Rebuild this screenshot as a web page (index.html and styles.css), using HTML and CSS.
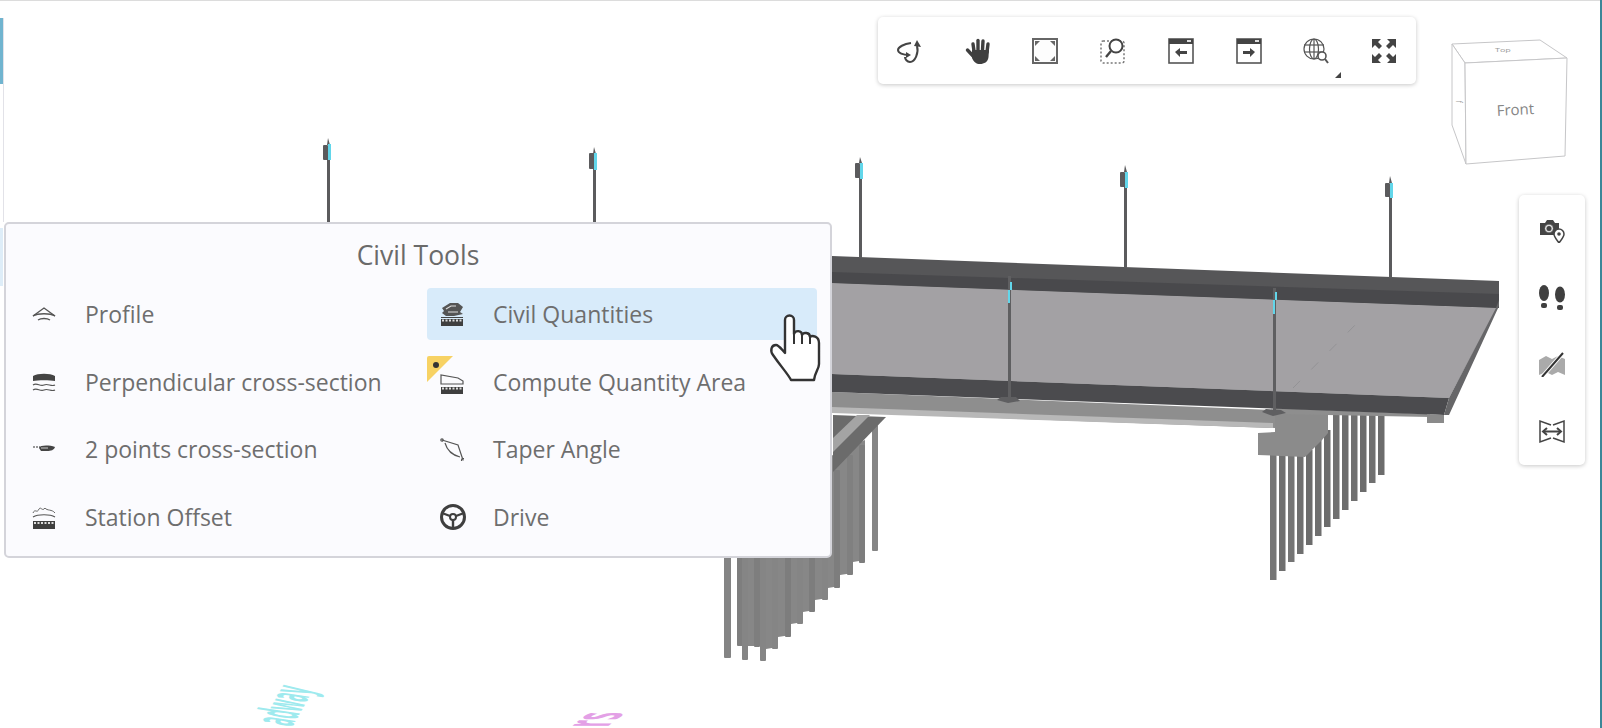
FILE: index.html
```html
<!DOCTYPE html>
<html lang="en">
<head>
    <meta charset="UTF-8">
    <title>Civil Tools</title>
    <link rel="stylesheet" href="styles.css">
</head>
<body>
<div class="viewer">
    <!-- 3D model -->
    <svg class="scene" width="1602" height="728" viewBox="0 0 1602 728">
        <!-- left pier -->
        <polygon fill="#878787" points="737,500 865,440 865,560 853,562 853,573 840,575 840,586 828,588 828,598 815,600 815,610 803,612 803,622 791,624 791,635 778,637 778,647 766,649 766,633 754,633 754,646 748,646 748,633 737,633"/>
        <rect x="724" y="540" width="7" height="118" rx="1" fill="#848484"/>
        <rect x="737" y="540" width="6" height="106" rx="1" fill="#7e7e7e"/>
        <rect x="742" y="540" width="6" height="120" rx="1" fill="#858585"/>
        <rect x="754" y="540" width="6" height="107" rx="1" fill="#7e7e7e"/>
        <rect x="760" y="540" width="6" height="121" rx="1" fill="#858585"/>
        <rect x="772" y="540" width="6" height="109" rx="1" fill="#858585"/>
        <rect x="785" y="540" width="6" height="97" rx="1" fill="#7d7d7d"/>
        <rect x="797" y="540" width="6" height="84" rx="1" fill="#858585"/>
        <rect x="809" y="540" width="6" height="72" rx="1" fill="#7d7d7d"/>
        <rect x="822" y="540" width="6" height="60" rx="1" fill="#858585"/>
        <rect x="834" y="470" width="6" height="118" rx="1" fill="#7d7d7d"/>
        <rect x="847" y="455" width="6" height="120" rx="1" fill="#808080"/>
        <rect x="859" y="445" width="6" height="118" rx="1" fill="#7d7d7d"/>
        <rect x="872" y="425" width="6" height="126" rx="1" fill="#858585"/>
        <polygon fill="#6b6b6b" points="833,415 886,417 833,472"/>
        <polygon fill="#a4a4a4" points="833,438 857,415 870,415 833,452"/>

        <!-- right pier -->
        <rect x="1270" y="452" width="6.500" height="128" fill="#757575"/>
        <rect x="1279" y="452" width="6.500" height="119" fill="#6f6f6f"/>
        <rect x="1288" y="452" width="6.500" height="110" fill="#757575"/>
        <rect x="1297" y="452" width="6.500" height="102" fill="#6f6f6f"/>
        <rect x="1306" y="450" width="6.500" height="95" fill="#6c6c6c"/>
        <rect x="1315" y="440" width="6.500" height="96" fill="#6f6f6f"/>
        <rect x="1324" y="430" width="6.500" height="97" fill="#6c6c6c"/>
        <rect x="1333" y="413" width="6.500" height="106" fill="#707070"/>
        <rect x="1342" y="413" width="6.500" height="97" fill="#6c6c6c"/>
        <rect x="1351" y="413" width="6.500" height="88" fill="#707070"/>
        <rect x="1360" y="413" width="6.500" height="79" fill="#6c6c6c"/>
        <rect x="1369" y="413" width="6.500" height="70" fill="#707070"/>
        <rect x="1378" y="413" width="6.500" height="62" fill="#6c6c6c"/>
        <polygon fill="#8b8b8b" points="1258,433 1275,432 1275,413 1328,413 1328,433 1322,440 1305,457 1258,455"/>

        <!-- deck -->
        <polygon fill="#8e8e8e" points="832,392 1275,410 1275,428 832,412"/>
        <polygon fill="#b8b8b8" points="832,407 1273,423 1273,428 832,413"/>
        <polygon fill="#8e8e8e" points="1275,408 1430,414 1430,417 1275,414"/>
        <polygon fill="#a3a1a4" points="832,283 1497,308 1449,398 832,374"/>
        <polygon fill="#565658" points="832,256 1499,281 1499,308 832,283"/>
        <polygon fill="#49494c" points="832,272 1499,294 1499,308 832,283"/>
        <polygon fill="#4b4b4e" points="832,374 1449,398 1444,415 832,392"/>
        <polygon fill="#666668" points="1499,300 1499,306 1449,415 1444,415 1449,398 1496,308"/>
        <polygon fill="#8a8a8a" points="1427,414 1444,415 1444,423 1427,423"/>
        <line x1="1293" y1="388" x2="1362" y2="318" stroke="#8c8c8e" stroke-opacity=".7" stroke-dasharray="10 16"/>

        <!-- lamp posts, back row -->
        <g fill="#5b5b5d">
            <rect x="327" y="150" width="3" height="72"/>
            <rect x="593" y="160" width="3" height="62"/>
            <rect x="859" y="170" width="3" height="88"/>
            <rect x="1124" y="178" width="3" height="90"/>
            <rect x="1389" y="190" width="3" height="88"/>
            <polygon points="328,138 330,145 327,145"/>
            <polygon points="594,147 596,154 593,154"/>
            <polygon points="860,157 862,163 859,163"/>
            <polygon points="1125,165 1127,172 1124,172"/>
            <polygon points="1390,176 1392,183 1389,183"/>
            <rect x="323" y="145" width="5" height="15" rx="1"/>
            <rect x="589" y="153" width="5" height="16" rx="1"/>
            <rect x="855" y="163" width="5" height="15" rx="1"/>
            <rect x="1120" y="172" width="5" height="15" rx="1"/>
            <rect x="1385" y="183" width="5" height="14" rx="1"/>
        </g>
        <g fill="#62d6ea">
            <rect x="328" y="144" width="3" height="16"/>
            <rect x="594" y="153" width="3" height="17"/>
            <rect x="860" y="163" width="3" height="16"/>
            <rect x="1125" y="172" width="3" height="16"/>
            <rect x="1390" y="183" width="3" height="15"/>
        </g>

        <!-- lamp posts, front row -->
        <g fill="#5f5f61">
            <rect x="1008" y="276" width="3" height="122"/>
            <rect x="1273" y="288" width="3" height="124"/>
            <polygon points="997,400 1001,397 1016,397 1020,401 1008,403"/>
            <polygon points="1262,412 1266,409 1281,410 1286,413 1273,416"/>
        </g>
        <g fill="#62d6ea">
            <rect x="1010" y="282" width="2" height="8"/>
            <rect x="1008" y="290" width="2" height="13"/>
            <rect x="1275" y="292" width="2" height="8"/>
            <rect x="1273" y="300" width="2" height="14"/>
        </g>

        <!-- labels lying in the model -->
        <text class="scene-label scene-label-cyan" transform="matrix(.6 -1.05 5 .75 292 727)">adway</text>
        <text class="scene-label scene-label-pink" transform="matrix(1.8 -1.4 6 0 607 727)">rs</text>

        <!-- view cube -->
        <g fill="#fff" stroke="#c6c6c8" stroke-width="1">
            <polygon points="1452,44 1540,40 1567,58 1465,63"/>
            <polygon points="1452,44 1465,63 1466,164 1452,125"/>
            <polygon points="1465,63 1567,58 1565,156 1466,164"/>
        </g>
        <text class="cube-label" transform="translate(1497 116) rotate(-3)">Front</text>
        <text class="cube-mini" transform="translate(1456 101) rotate(90) scale(.6 1)">f</text>
        <text class="cube-mini" transform="translate(1495 52) scale(1 .5)">Top</text>
    </svg>

    <div class="frame-top"></div>
    <div class="frame-left"></div>
    <div class="frame-tab"></div>
    <div class="frame-tab-low"></div>
    <div class="frame-right"></div>

    <!-- main toolbar -->
    <div class="toolbar">
        <svg class="tool" viewBox="0 0 26 26" fill="none" stroke="#444" stroke-width="2">
            <path d="M12 17C6 17 1 15 1 12 1 9 7 6 14 5"/>
            <path d="M20 8C22 15 18 24 13 24 10 24 8 21 8 19"/>
            <polygon points="20,2 24,9 17,8" fill="#444" stroke="none"/>
            <polygon points="14,17 9,14 9,20" fill="#444" stroke="none"/>
        </svg>
        <svg class="tool" viewBox="0 0 26 26">
            <g stroke="#3f3f3f" stroke-width="3.4" stroke-linecap="round">
                <line x1="9" y1="13" x2="8" y2="6"/>
                <line x1="13" y1="12" x2="13" y2="2.5"/>
                <line x1="17.5" y1="12" x2="18" y2="3"/>
                <line x1="22" y1="14" x2="23" y2="6"/>
                <line x1="9" y1="19" x2="2.5" y2="12"/>
            </g>
            <path d="M7 12H24L23.5 19C23 24 19 26 15 26 11 26 9 24 7 20Z" fill="#3f3f3f"/>
        </svg>
        <svg class="tool" viewBox="0 0 26 26">
            <rect x="1" y="1" width="24" height="24" fill="#fdfdfd" stroke="#666" stroke-width="2"/>
            <g fill="#666">
                <polygon points="3,3 8,3 3,8"/>
                <polygon points="23,3 18,3 23,8"/>
                <polygon points="3,23 8,23 3,18"/>
                <polygon points="23,23 18,23 23,18"/>
            </g>
        </svg>
        <svg class="tool" viewBox="0 0 26 26" fill="none">
            <rect x="1" y="3" width="23" height="22" rx="2" stroke="#777" stroke-width="1.5" stroke-dasharray="2 2"/>
            <circle cx="16" cy="8" r="6.5" fill="#fff" stroke="#444" stroke-width="2"/>
            <line x1="11" y1="13" x2="6" y2="19" stroke="#444" stroke-width="2.4"/>
        </svg>
        <svg class="tool" viewBox="0 0 26 26">
            <rect x="1" y="1" width="24" height="24" fill="#fff" stroke="#555" stroke-width="1.6"/>
            <rect x="1" y="1" width="24" height="5" fill="#444"/>
            <rect x="19" y="2" width="4" height="2" fill="#ddd"/>
            <path d="M7 14L12 10V13H19V16H12V19Z" fill="#444"/>
        </svg>
        <svg class="tool" viewBox="0 0 26 26">
            <rect x="1" y="1" width="24" height="24" fill="#fff" stroke="#555" stroke-width="1.6"/>
            <rect x="1" y="1" width="24" height="5" fill="#444"/>
            <rect x="19" y="2" width="4" height="2" fill="#ddd"/>
            <path d="M19 14L14 10V13H7V16H14V19Z" fill="#444"/>
        </svg>
        <div class="tool tool-more">
            <svg class="tool" viewBox="0 0 26 26" fill="none" stroke="#555" stroke-width="1.2">
                <circle cx="11" cy="11" r="10"/>
                <ellipse cx="11" cy="11" rx="4.5" ry="10"/>
                <line x1="1" y1="7" x2="21" y2="7"/>
                <line x1="1" y1="14" x2="21" y2="14"/>
                <line x1="11" y1="1" x2="11" y2="21"/>
                <circle cx="19" cy="18" r="4" fill="#fff" stroke-width="1.6"/>
                <line x1="22" y1="21" x2="25" y2="25" stroke-width="2"/>
            </svg>
            <span class="more-arrow"></span>
        </div>
        <svg class="tool" viewBox="0 0 26 26" fill="#444">
            <polygon points="1,1 10,1 7,4 11,8 8,11 4,7 1,10"/>
            <polygon points="25,1 16,1 19,4 15,8 18,11 22,7 25,10"/>
            <polygon points="1,25 10,25 7,22 11,18 8,15 4,19 1,16"/>
            <polygon points="25,25 16,25 19,22 15,18 18,15 22,19 25,16"/>
        </svg>
    </div>

    <!-- side toolbar -->
    <div class="sidebar">
        <svg class="tool" viewBox="0 0 26 26">
            <path d="M1 6H6L8 3H14L16 6H20V18H1Z" fill="#444"/>
            <circle cx="10" cy="11.500" r="4.500" fill="#ddd" stroke="#444" stroke-width="1"/>
            <circle cx="10" cy="11.500" r="2.500" fill="#444"/>
            <path d="M20 12A5 5 0 0 1 25 17C25 20 22 23 20 26 18 23 15 20 15 17A5 5 0 0 1 20 12Z" fill="#fff" stroke="#444" stroke-width="1.500"/>
            <circle cx="20" cy="17" r="1.800" fill="#444"/>
        </svg>
        <svg class="tool" viewBox="0 0 26 26" fill="#3f3f3f">
            <ellipse cx="5" cy="9" rx="5" ry="8"/>
            <ellipse cx="21" cy="10.500" rx="5" ry="8"/>
            <rect x="2" y="19" width="6" height="5" rx="2"/>
            <rect x="18" y="21" width="6" height="5" rx="2"/>
        </svg>
        <svg class="tool" viewBox="0 0 26 26">
            <path d="M0 9L7 5 13 8 19 5 26 8V24L19 21 13 24 7 21 0 24Z" fill="#aaa"/>
            <line x1="3" y1="26" x2="24" y2="2" stroke="#fff" stroke-width="4"/>
            <line x1="3" y1="26" x2="24" y2="2" stroke="#333" stroke-width="2"/>
        </svg>
        <svg class="tool" viewBox="0 0 26 26" fill="none" stroke="#444" stroke-width="1.500">
            <path d="M12 7L1 3V24L12 20"/>
            <path d="M14 7L25 3V24L14 20"/>
            <path d="M4 13.500H22" stroke-width="2"/>
            <path d="M8 10L4 13.500 8 17M18 10L22 13.500 18 17" stroke-width="2"/>
        </svg>
    </div>

    <!-- civil tools menu -->
    <div class="menu">
        <div class="menu-title">Civil Tools</div>
        <div class="menu-grid">
            <div class="menu-item">
                <svg class="menu-icon" viewBox="0 0 24 24" fill="none" stroke="#555" stroke-width="1.300">
                    <path d="M1 14L12 6 23 14"/>
                    <path d="M1 14C6 11 18 11 23 14"/>
                    <path d="M6 18C9 16 15 16 18 18"/>
                </svg>
                <span>Profile</span>
            </div>
            <div class="menu-item is-active">
                <svg class="menu-icon" viewBox="0 0 24 24">
                    <path d="M2 6L10 1H18L23 5 20 10 23 12 14 14H6L2 11 4 9Z" fill="#555"/>
                    <path d="M6 7L11 4H16M8 10H18" stroke="#ddd" stroke-width="1.200" fill="none"/>
                    <line x1="1" y1="15.500" x2="23" y2="15.500" stroke="#444"/>
                    <rect x="1" y="17" width="22" height="7" fill="#3f3f3f"/>
                    <line x1="2" y1="18.500" x2="22" y2="18.500" stroke="#ddd" stroke-width="2" stroke-dasharray="2 1.500"/>
                </svg>
                <span>Civil Quantities</span>
                <svg class="cursor" width="54" height="68" viewBox="0 0 54 68">
                    <path d="M17 39V6A4.500 4.500 0 0 1 26 6V20C27 16 34 16 34 21 35 18 42 18 42 23 44 21 51 22 51 29V50C51 55 47 58 46 66H23C20 60 14 54 5 41 2 37 3 31 8 31 11 31 14 36 17 39Z" fill="#fff" stroke="#333" stroke-width="2.400" stroke-linejoin="round"/>
                    <path d="M26 20V30M34 21V30M42 23V30" stroke="#333" stroke-width="2" fill="none"/>
                </svg>
            </div>
            <div class="menu-item">
                <svg class="menu-icon" viewBox="0 0 24 24">
                    <path d="M1 6C6 3 18 3 23 6V11C18 10 6 10 1 11Z" fill="#444"/>
                    <path d="M1 15C5 12 8 17 12 15 16 13 19 17 23 15M1 20C5 17 8 22 12 20 16 18 19 22 23 20" fill="none" stroke="#555" stroke-width="1.200"/>
                </svg>
                <span>Perpendicular cross-section</span>
            </div>
            <div class="menu-item">
                <svg class="flag" width="26" height="26" viewBox="0 0 26 26">
                    <path d="M2 0H26L0 26V2A2 2 0 0 1 2 0Z" fill="#f7d264"/>
                    <circle cx="9" cy="9" r="3" fill="#333"/>
                </svg>
                <svg class="menu-icon" viewBox="0 0 24 24">
                    <path d="M1 14V5L18 8 23 11V14Z" fill="none" stroke="#555" stroke-width="1.200"/>
                    <rect x="1" y="17" width="22" height="7" fill="#3f3f3f"/>
                    <line x1="2" y1="18.500" x2="22" y2="18.500" stroke="#ddd" stroke-width="2" stroke-dasharray="2 1.500"/>
                </svg>
                <span>Compute Quantity Area</span>
            </div>
            <div class="menu-item">
                <svg class="menu-icon" viewBox="0 0 24 24">
                    <path d="M1 10H8" stroke="#777" stroke-width="1.300" stroke-dasharray="2 1"/>
                    <path d="M7 11C8 8 17 8 23 10 22 13 19 14 15 14H9Z" fill="#444"/>
                    <line x1="9" y1="11" x2="16" y2="11" stroke="#ccc"/>
                </svg>
                <span>2 points cross-section</span>
            </div>
            <div class="menu-item">
                <svg class="menu-icon" viewBox="0 0 24 24" fill="none" stroke="#555" stroke-width="1.200">
                    <path d="M2 3L18 8 23 23"/>
                    <path d="M5 6C7 13 12 18 20 20"/>
                    <circle cx="2" cy="3" r="1.200"/>
                    <circle cx="23" cy="23" r="1.500"/>
                </svg>
                <span>Taper Angle</span>
            </div>
            <div class="menu-item">
                <svg class="menu-icon" viewBox="0 0 24 24">
                    <path d="M1 8C3 3 5 9 7 4 9 1 10 7 13 3 15 6 20 4 23 8" fill="none" stroke="#666" stroke-width="1"/>
                    <path d="M1 12C6 9 18 9 23 12" fill="none" stroke="#555" stroke-width="1.200"/>
                    <rect x="1" y="16" width="22" height="8" fill="#3f3f3f"/>
                    <line x1="2" y1="18" x2="22" y2="18" stroke="#ddd" stroke-width="2" stroke-dasharray="2 1.500"/>
                </svg>
                <span>Station Offset</span>
            </div>
            <div class="menu-item">
                <svg class="menu-icon menu-icon-wheel" viewBox="0 0 26 26" fill="none" stroke="#3f3f3f" stroke-width="3">
                    <circle cx="13" cy="13" r="11.500"/>
                    <path d="M2 9L10 12M24 9L16 12M13 16V24" stroke-width="2.400"/>
                    <circle cx="13" cy="13" r="3" stroke-width="2"/>
                </svg>
                <span>Drive</span>
            </div>
        </div>
    </div>
</div>
</body>
</html>
```

FILE: styles.css
```css
html, body {
    margin: 0;
    padding: 0;
    background: #fff;
}
body {
    font-family: "Open Sans", "Noto Sans", sans-serif;
    color: #666;
}
.viewer {
    position: relative;
    width: 1602px;
    height: 728px;
    overflow: hidden;
    background: #fff;
}
.scene {
    position: absolute;
    left: 0;
    top: 0;
}
.scene-label {
    font-family: "Open Sans", sans-serif;
    font-size: 11px;
    font-weight: 700;
}
.scene-label-cyan {
    fill: #9eeaee;
}
.scene-label-pink {
    fill: #e3a0e6;
}
.cube-label {
    font-family: "Open Sans", sans-serif;
    font-size: 15px;
    fill: #858585;
}
.cube-mini {
    font-family: "Open Sans", sans-serif;
    font-size: 9px;
    fill: #999;
}

.frame-top {
    position: absolute;
    left: 0;
    top: 0;
    width: 100%;
    height: 1px;
    background: #dcdcdc;
}
.frame-left {
    position: absolute;
    left: 3px;
    top: 18px;
    width: 1px;
    height: 204px;
    background: #e2e2e8;
}
.frame-tab {
    position: absolute;
    left: 0;
    top: 18px;
    width: 3px;
    height: 66px;
    background: #70b4cf;
}
.frame-tab-low {
    position: absolute;
    left: 0;
    top: 228px;
    width: 3px;
    height: 58px;
    background: #deedf8;
}
.frame-right {
    position: absolute;
    right: 0;
    top: 0;
    width: 2px;
    height: 100%;
    background: #3b8798;
}

.tool {
    display: block;
    width: 26px;
    height: 26px;
    flex: none;
}
.toolbar {
    position: absolute;
    left: 878px;
    top: 17px;
    width: 538px;
    height: 67px;
    box-sizing: border-box;
    padding: 0 19px;
    display: flex;
    align-items: center;
    justify-content: space-between;
    background: #fff;
    border-radius: 5px;
    box-shadow: 0 1px 4px rgba(0,0,0,0.22);
}
.tool-more {
    position: relative;
}
.more-arrow {
    position: absolute;
    left: 32px;
    top: 34px;
    width: 0;
    height: 0;
    border-left: 6px solid transparent;
    border-bottom: 6px solid #444;
}
.sidebar {
    position: absolute;
    left: 1519px;
    top: 195px;
    width: 66px;
    height: 270px;
    box-sizing: border-box;
    padding-top: 22px;
    display: flex;
    flex-direction: column;
    align-items: center;
    gap: 41px;
    background: #fff;
    border-radius: 5px;
    box-shadow: 0 1px 4px rgba(0,0,0,0.22);
}

.menu {
    position: absolute;
    left: 4px;
    top: 222px;
    width: 828px;
    height: 336px;
    box-sizing: border-box;
    padding: 0 13px;
    background: #fbfbfe;
    border: 2px solid #d4d4da;
    border-radius: 5px;
}
.menu-title {
    height: 64px;
    line-height: 62px;
    text-align: center;
    font-size: 26.500px;
    color: #6a6a6a;
}
.menu-grid {
    display: grid;
    grid-template-columns: 390px 390px;
    grid-auto-rows: 52px;
    column-gap: 18px;
    row-gap: 15.500px;
    grid-auto-flow: row;
}
.menu-item {
    position: relative;
    display: flex;
    align-items: center;
    gap: 29px;
    padding-left: 13px;
    border-radius: 4px;
    font-size: 23px;
    color: #6e6e6e;
}
.menu-item.is-active {
    background: #d8ebfa;
}
.menu-icon {
    display: block;
    width: 24px;
    height: 24px;
    flex: none;
}
.menu-icon-wheel {
    width: 26px;
    height: 26px;
    margin-right: -2px;
}
.flag {
    position: absolute;
    left: 0;
    top: 0;
}
.cursor {
    position: absolute;
    left: 341px;
    top: 26px;
}
```
